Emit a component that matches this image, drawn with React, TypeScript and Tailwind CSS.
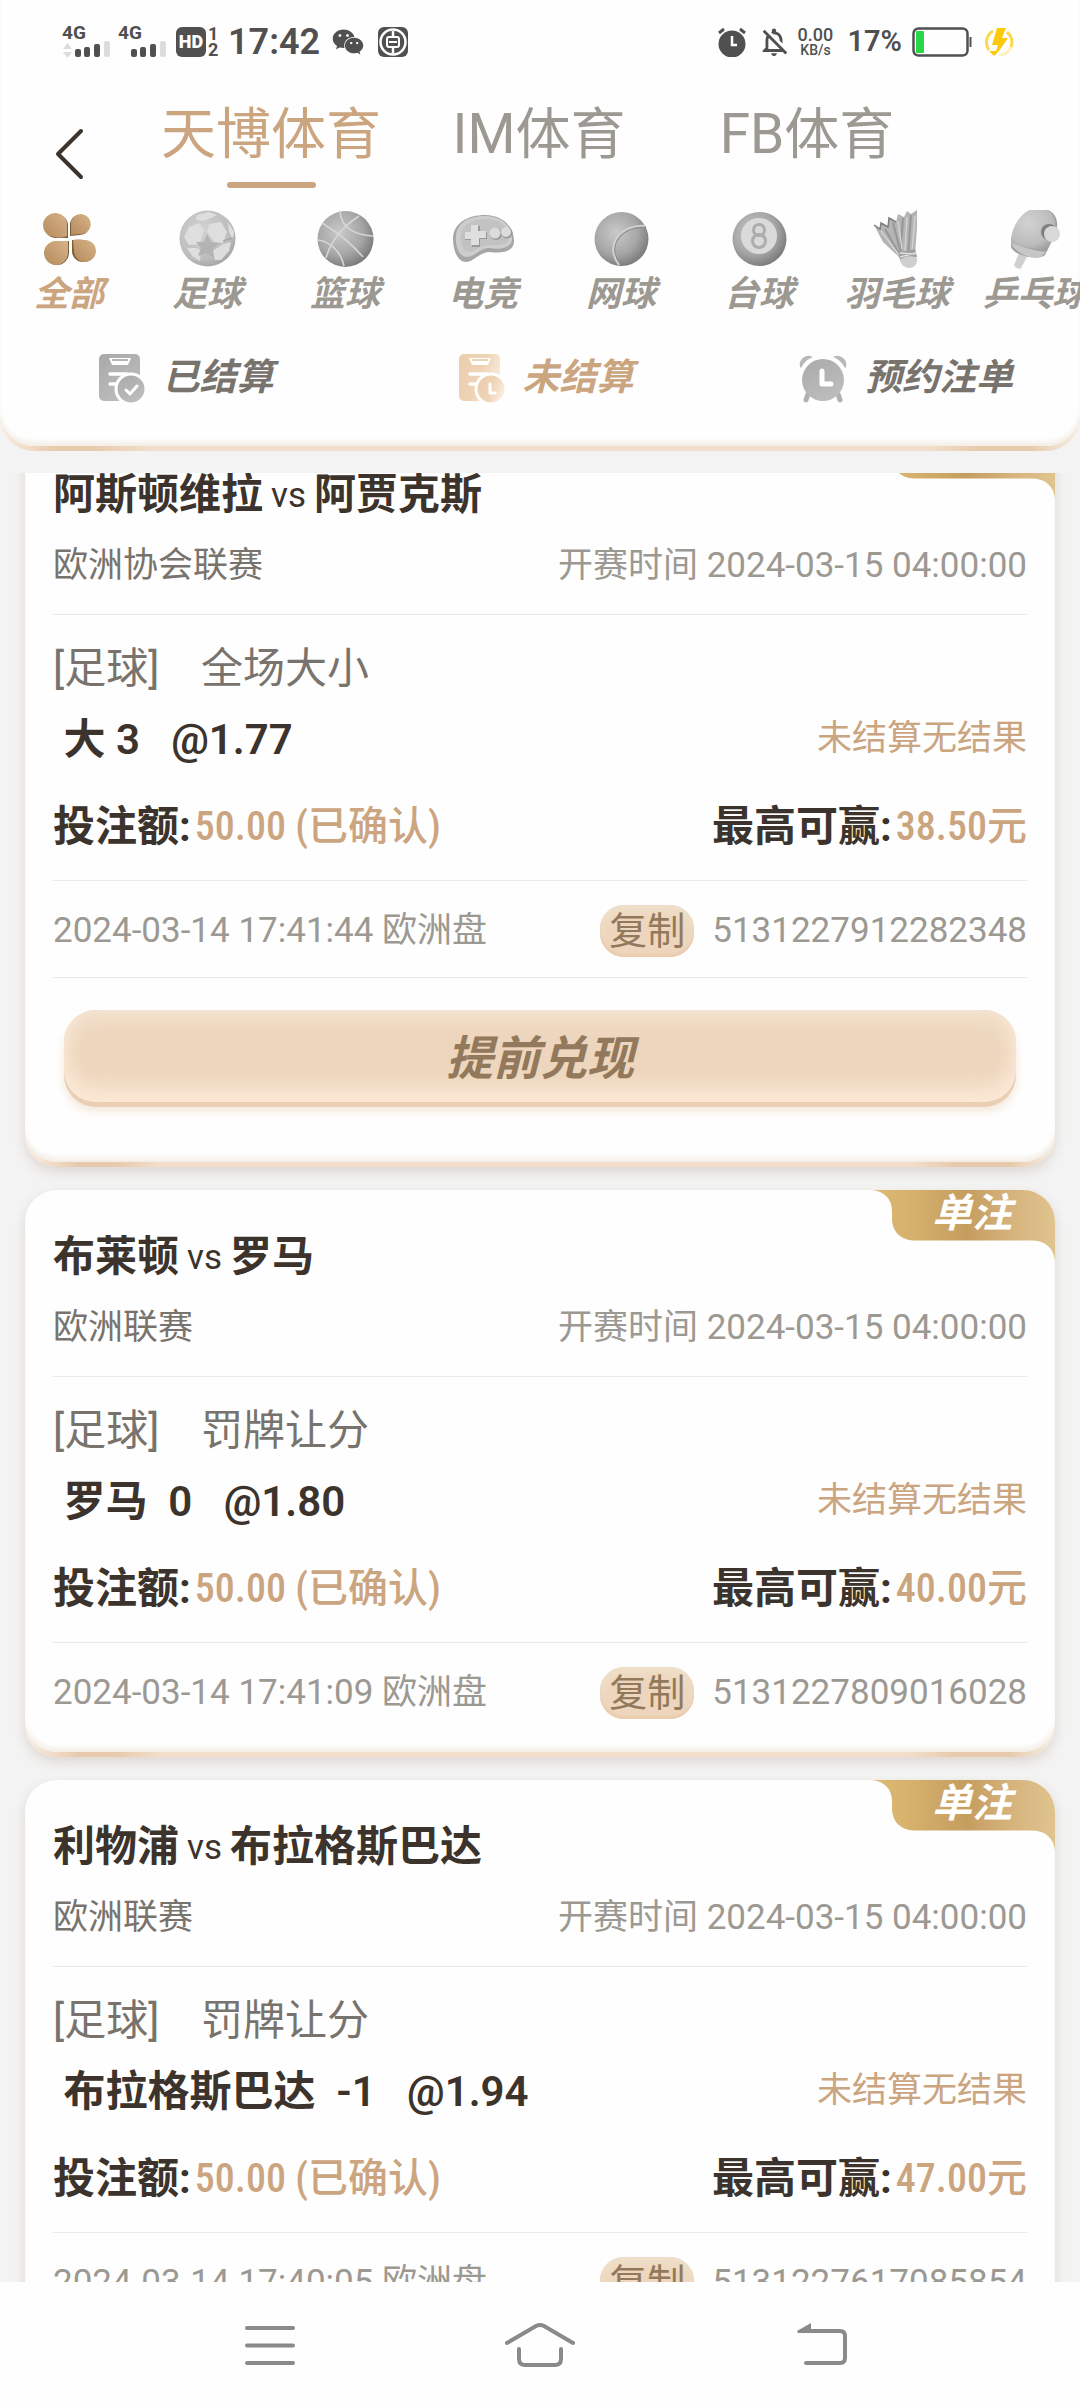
import type { ReactNode } from 'react';
import { FaWeixin } from 'react-icons/fa';
import { MdOutlineNotificationsOff } from 'react-icons/md';

interface Bet {
  id: string;
  home: string;
  away: string;
  league: string;
  startTime: string;
  market: string;
  pick: string;
  stake: string;
  maxWin: string;
  placedAt: string;
  cashOut?: boolean;
}

const BETS: Bet[] = [
  {
    id: '5131227912282348',
    home: '阿斯顿维拉',
    away: '阿贾克斯',
    league: '欧洲协会联赛',
    startTime: '2024-03-15 04:00:00',
    market: '全场大小',
    pick: ' 大 3   @1.77',
    stake: '50.00',
    maxWin: '38.50',
    placedAt: '2024-03-14 17:41:44',
    cashOut: true,
  },
  {
    id: '5131227809016028',
    home: '布莱顿',
    away: '罗马',
    league: '欧洲联赛',
    startTime: '2024-03-15 04:00:00',
    market: '罚牌让分',
    pick: ' 罗马  0   @1.80',
    stake: '50.00',
    maxWin: '40.00',
    placedAt: '2024-03-14 17:41:09',
  },
  {
    id: '5131227617085854',
    home: '利物浦',
    away: '布拉格斯巴达',
    league: '欧洲联赛',
    startTime: '2024-03-15 04:00:00',
    market: '罚牌让分',
    pick: ' 布拉格斯巴达  -1   @1.94',
    stake: '50.00',
    maxWin: '47.00',
    placedAt: '2024-03-14 17:40:05',
  },
];

/* Shared gradients, referenced by id from the icons below */
function GradientDefs() {
  return (
    <svg width="0" height="0" className="absolute" aria-hidden="true">
      <defs>
        <radialGradient id="ball" cx="0.4" cy="0.38" r="0.68">
          <stop offset="0" stopColor="#c9c9c9" />
          <stop offset="0.6" stopColor="#a6a6a6" />
          <stop offset="1" stopColor="#757575" />
        </radialGradient>
        <radialGradient id="ballLight" cx="0.4" cy="0.35" r="0.75">
          <stop offset="0" stopColor="#d2d2d2" />
          <stop offset="0.7" stopColor="#bcbcbc" />
          <stop offset="1" stopColor="#9a9a9a" />
        </radialGradient>
        <linearGradient id="leaf" x1="1" y1="0" x2="0" y2="1">
          <stop offset="0" stopColor="#d8b48a" />
          <stop offset="1" stopColor="#b48a5b" />
        </linearGradient>
        <linearGradient id="grayFill" x1="0" y1="0" x2="0.6" y2="1">
          <stop offset="0" stopColor="#a9a9a9" />
          <stop offset="1" stopColor="#bdbdbd" />
        </linearGradient>
        <linearGradient id="goldFill" x1="0" y1="0" x2="1" y2="0.4">
          <stop offset="0" stopColor="#ecceae" />
          <stop offset="0.6" stopColor="#efd3b5" />
          <stop offset="1" stopColor="#f9eadb" />
        </linearGradient>
        <linearGradient id="ribbon" x1="0" y1="0" x2="1" y2="0">
          <stop offset="0" stopColor="#ddba70" />
          <stop offset="0.2" stopColor="#d6b26d" />
          <stop offset="0.52" stopColor="#c59d5f" />
          <stop offset="0.76" stopColor="#d6b37d" />
          <stop offset="1" stopColor="#e0c48e" />
        </linearGradient>
      </defs>
    </svg>
  );
}

function AllIcon() {
  return (
    <svg width="57" height="57" viewBox="0 0 57 57">
      <g fill="#7d5c3a">
        <path d="M27 28H14A12 12 0 1 1 27 15Z" />
        <path d="M29 26V13A10 10 0 1 1 39 25Z" />
        <path d="M28 31V43A12 12 0 1 1 16 31Z" />
        <path d="M31 30H42A11 11 0 1 1 31 41Z" />
      </g>
      <g fill="url(#leaf)">
        <path d="M26 26C22 28 18 28 13 27A12 12 0 1 1 26 16Z" />
        <path d="M30 25V12A10 10 0 1 1 39 24Z" />
        <path d="M27 31V43A12 12 0 1 1 16 31Z" />
        <path d="M32 30C36 29 40 29 43 30A11 11 0 1 1 33 42Z" />
      </g>
    </svg>
  );
}

function FootballIcon() {
  return (
    <svg width="57" height="57" viewBox="0 0 57 57">
      <circle cx="28.500" cy="28.500" r="28" fill="url(#ballLight)" />
      <g fill="#dedede">
        <path d="M10 17L20 13L25 20L21 34L10 35L5 27Z" />
        <path d="M30 14L42 12L48 22L44 33L35 32L28 22Z" />
        <path d="M17 38L22 40L21 51L14 47L8 38Z" />
        <path d="M34 41L44 34L52 32L50 41L42 50L36 50Z" />
        <path d="M18 5L30 2L38 5L32 8L24 11L17 10Z" />
        <path d="M49 12L55 22L54 30L50 22Z" />
      </g>
      <path d="M28 24L32 32L40 33L34 39L35 48L27 43L19 46L22 38L17 32L25 32Z" fill="#b3b3b3" />
      <path d="M44 31L54 28" stroke="#a0a0a0" fill="none" />
    </svg>
  );
}

function BasketballIcon() {
  return (
    <svg width="57" height="57" viewBox="0 0 57 57">
      <circle cx="28.500" cy="29" r="28" fill="url(#ball)" />
      <g fill="none" stroke="#d6d6d6" strokeWidth="1.600">
        <path d="M9 48C14 30 27 16 42 6" />
        <path d="M5 13C20 22 34 33 46 47" />
        <path d="M23 1C24 18 38 25 56 26" />
        <path d="M1 30C14 32 24 42 27 56" />
      </g>
    </svg>
  );
}

function GamepadIcon() {
  return (
    <svg width="62" height="57" viewBox="0 0 62 57">
      <path d="M1 29C1 13 16 5 33 5C51 5 62 17 62 31C62 41 51 44 38 42C27 42 22 52 14 52C6 52 1 41 1 29Z" fill="#a6a6a6" />
      <path d="M4 26C5 12 18 6 33 6C50 6 61 17 60 30C59 38 49 40 38 38C28 37 23 47 15 47C8 47 3 38 4 26Z" fill="#cdcdcd" />
      <path d="M9 25C11 13 22 9 34 9C48 9 57 18 57 27C57 35 47 36 38 35C28 35 23 42 17 42C11 42 8 34 9 25Z" fill="#c2c2c2" />
      <path d="M20 16H28V22H35V29H28V37H20V30H13V23H20Z" fill="#999" />
      <path d="M19 15H26V21H34V28H27V35H19V29H13V22H19Z" fill="#dfdfdf" />
      <circle cx="44" cy="24" r="6" fill="#999" />
      <circle cx="43" cy="23" r="5.500" fill="#dcdcdc" />
      <circle cx="55" cy="23" r="5.500" fill="#999" />
      <circle cx="54" cy="22" r="5" fill="#dcdcdc" />
    </svg>
  );
}

function TennisIcon() {
  return (
    <svg width="57" height="57" viewBox="0 0 57 57">
      <circle cx="28.500" cy="29" r="27" fill="url(#ball)" />
      <path d="M53 17C31 15 11 34 27 55" fill="none" stroke="#8a8a8a" strokeWidth="2" />
      <path d="M52 16C30 14 10 34 26 55" fill="none" stroke="#d2d2d2" strokeWidth="2" />
    </svg>
  );
}

function BilliardsIcon() {
  return (
    <svg width="57" height="57" viewBox="0 0 57 57">
      <circle cx="28.500" cy="29" r="27" fill="url(#ball)" />
      <circle cx="28" cy="26" r="18" fill="#dadada" />
      <circle cx="28" cy="20" r="5.500" fill="none" stroke="#acacac" strokeWidth="3" />
      <circle cx="28" cy="31" r="6.500" fill="none" stroke="#acacac" strokeWidth="3" />
    </svg>
  );
}

function ShuttlecockIcon() {
  return (
    <svg width="57" height="60" viewBox="0 0 57 60">
      <path d="M5 16L11 20L12 14L19 18L20 9L27 13L29 5L35 8L38 2L42 5L48 1V18L46 46L31 49L14 33Z" fill="#b4b4b4" />
      <path d="M34 9L31 49M42 6L39 46M24 14L33 48M16 20L32 48" stroke="#979797" strokeWidth="2" fill="none" />
      <path d="M29 12L33 40M38 8L36 42M46 7L43 44M12 22L30 46" stroke="#d2d2d2" strokeWidth="1.500" fill="none" />
      <path d="M5 16L11 20L12 14L19 18L20 9L27 13" stroke="#7c7c7c" strokeWidth="1.500" fill="none" />
      <path d="M30 43L46 40L48 48L31 51Z" fill="#a0a0a0" />
      <path d="M31 44L46 45M31 48L47 44" stroke="#dedede" strokeWidth="1.500" />
      <path d="M31 51C35 47 43 46 48 49C49 55 45 59 40 59C36 59 32 56 31 51Z" fill="#cfcfcf" />
    </svg>
  );
}

function PingPongIcon() {
  return (
    <svg width="57" height="63" viewBox="0 0 57 63">
      <path d="M12 46L20 50L14 61C13 63 8 61 7 58Z" fill="#d0d0d0" />
      <path d="M4 34C5 18 18 1 33 1C47 2 53 12 49 26L38 48C32 54 7 49 4 40Z" fill="#a2a2a2" />
      <path d="M4 33C5 17 17 1 31 1C46 2 51 12 47 26L40 43C28 43 14 40 4 36Z" fill="url(#ballLight)" />
      <path d="M4 36C14 39 26 44 39 45L34 50C24 53 8 46 4 36Z" fill="#c6c6c6" />
      <circle cx="42" cy="25" r="8" fill="#7f7f7f" />
      <circle cx="45" cy="27" r="8" fill="#d8d8d8" />
    </svg>
  );
}

function SheetIcon({ fill, mark }: { fill: string; mark: string }) {
  return (
    <svg width="46" height="49" viewBox="0 0 46 49" className="shrink-0">
      <rect width="41" height="47" rx="5" fill={fill} />
      <path d="M10 4H32L29 11H13Z" fill="#fff" />
      <path d="M13 6H29" stroke={fill === 'url(#grayFill)' ? '#b5b5b5' : '#eed3b5'} strokeWidth="2" />
      <path d="M11 20H28M11 30H18" stroke="#fff" strokeWidth="3.500" strokeLinecap="round" />
      <circle cx="32" cy="35" r="16.500" fill="#fff" />
      <circle cx="32" cy="35" r="13.500" fill={fill} />
      <path d={mark} fill="none" stroke="#fff" strokeWidth="3" strokeLinecap="round" strokeLinejoin="round" />
    </svg>
  );
}

function AlarmIcon() {
  return (
    <svg width="48" height="49" viewBox="0 0 48 49" className="shrink-0">
      <path d="M9 40L7 46M39 40L41 46" stroke="#b0b0b0" strokeWidth="5" strokeLinecap="round" />
      <path d="M1 13A9 9 0 0 1 14 3C9 5 5 8 2 14ZM47 13A9 9 0 0 0 34 3C39 5 43 8 46 14Z" fill="#b8b8b8" />
      <circle cx="24" cy="26" r="21" fill="url(#grayFill)" />
      <path d="M23 17V30H32" fill="none" stroke="#fff" strokeWidth="5" strokeLinecap="round" strokeLinejoin="round" />
    </svg>
  );
}

const SPORTS: { name: string; icon: ReactNode }[] = [
  { name: '全部', icon: <AllIcon /> },
  { name: '足球', icon: <FootballIcon /> },
  { name: '篮球', icon: <BasketballIcon /> },
  { name: '电竞', icon: <GamepadIcon /> },
  { name: '网球', icon: <TennisIcon /> },
  { name: '台球', icon: <BilliardsIcon /> },
  { name: '羽毛球', icon: <ShuttlecockIcon /> },
  { name: '乒乓球', icon: <PingPongIcon /> },
];

function Signal({ data = false }: { data?: boolean }) {
  return (
    <div className="flex w-12 flex-col">
      <span className="text-[19px] font-bold leading-4">4G</span>
      <svg width="48" height="18" viewBox="0 0 48 18">
        {data && <path d="M1 8L5.500 2L10 8ZM1 11L5.500 17L10 11Z" fill="#dcdcdc" />}
        <rect x="13" y="8" width="6" height="8" rx="2" fill="#505050" />
        <rect x="22" y="6" width="6" height="10" rx="2" fill="#505050" />
        <rect x="32" y="3" width="6" height="13" rx="2" fill="#505050" />
        <rect x="42" y="0" width="6" height="16" rx="2" fill="#dcdcdc" />
      </svg>
    </div>
  );
}

function StatusBar() {
  return (
    <div className="flex h-[84px] items-center justify-between pl-[62px] pr-[66px] text-[#505050]">
      <div className="flex items-center">
        <Signal data />
        <div className="ml-2">
          <Signal />
        </div>
        <span className="ml-2.5 flex h-[30px] w-[30px] items-center justify-center rounded-md bg-[#505050] text-lg font-black text-white">
          HD
        </span>
        <span className="ml-0.5 flex w-2.5 flex-col text-center text-lg font-bold leading-4">
          <span>1</span>
          <span>2</span>
        </span>
        <span className="ml-2.5 text-4xl font-semibold">17:42</span>
        <FaWeixin className="ml-3 h-8 w-8" />
        <svg width="30" height="30" viewBox="0 0 30 30" className="ml-3.5">
          <rect width="30" height="30" rx="6" fill="#505050" />
          <circle cx="15" cy="15" r="12.500" fill="none" stroke="#fff" strokeWidth="2.500" />
          <path d="M15 4V9M15 21V26" stroke="#fff" strokeWidth="2.500" />
          <rect x="9" y="10" width="12" height="10" rx="2" fill="none" stroke="#fff" strokeWidth="2" />
          <path d="M11 15H19" stroke="#fff" strokeWidth="2" />
        </svg>
      </div>
      <div className="flex items-center">
        <svg width="30" height="30" viewBox="0 0 30 30">
          <circle cx="15" cy="17" r="13.500" fill="#505050" />
          <path d="M2 6L7 2M28 6L23 2" stroke="#505050" strokeWidth="3" />
          <path d="M15 9V18H20" fill="none" stroke="#fff" strokeWidth="2.500" />
        </svg>
        <MdOutlineNotificationsOff className="ml-2.5 h-[34px] w-[34px]" />
        <span className="ml-1 flex w-10 flex-col items-center font-medium">
          <span className="text-lg leading-[17px]">0.00</span>
          <span className="text-sm leading-[15px]">KB/s</span>
        </span>
        <span className="ml-3 text-[29px] font-semibold">17%</span>
        <svg width="60" height="30" viewBox="0 0 60 30" className="ml-2.5">
          <rect x="1.500" y="1.500" width="54" height="27" rx="5" fill="none" stroke="#505050" strokeWidth="2.500" />
          <rect x="4" y="4" width="8" height="22" rx="1" fill="#28d745" />
          <path d="M58.500 10V20" stroke="#505050" strokeWidth="2" />
        </svg>
        <svg width="30" height="30" viewBox="0 0 30 30" className="ml-3">
          <path d="M9 4A13 13 0 0 0 5 23M23 5A13 13 0 0 1 27 20" fill="none" stroke="#fbd84e" strokeWidth="3" />
          <path d="M15 28A13 13 0 0 0 27 20" fill="none" stroke="#fdf0bd" strokeWidth="3" />
          <path d="M13 1H22L18 11H24L15 24L10 29L5 24H12L14 18H8Z" fill="#fdc90b" />
        </svg>
      </div>
    </div>
  );
}

function Tab({ label, active = false }: { label: string; active?: boolean }) {
  return (
    <button type="button" className="flex flex-col items-center gap-2">
      <span className={`text-[55px] leading-[80px] ${active ? 'text-[#cba57f]' : 'text-[#9c9892]'}`}>{label}</span>
      {active && <span className="h-1.5 w-[89px] rounded-full bg-[#cba57f]" />}
    </button>
  );
}

function Filter({ label, icon, active = false }: { label: string; icon: ReactNode; active?: boolean }) {
  return (
    <button
      type="button"
      className={`flex h-[58px] flex-1 items-center justify-center gap-[18px] pl-3 text-[37px] font-bold italic ${
        active ? 'text-[#cba57f]' : 'text-[#78736d]'
      }`}
    >
      {icon}
      {label}
    </button>
  );
}

function Header() {
  return (
    <header className="rounded-b-[34px] bg-[linear-gradient(90deg,#f8efe6_0,#f2decb_24px,#e7caac_56px,#e7caac_90px,#f2decb_150px,#f2decb_calc(100%-150px),#e7caac_calc(100%-100px),#e7caac_calc(100%-50px),#f8efe6_100%)] pb-[5px]">
      <div className="rounded-b-[34px] bg-[#fefefe] pb-[39px] shadow-[inset_0_-6px_5px_-2px_#f3ede6]">
        <StatusBar />
        <div className="flex h-[104px] pr-[139px]">
          <button type="button" aria-label="返回" className="flex w-[137px] items-center pl-[55px] pt-9">
            <svg width="29" height="52" viewBox="0 0 29 52">
              <path d="M26 3L3 26L26 49" fill="none" stroke="#3c342c" strokeWidth="4" strokeLinecap="round" strokeLinejoin="round" />
            </svg>
          </button>
          <nav className="grid flex-1 grid-cols-3 items-start pt-2.5">
            <Tab label="天博体育" active />
            <Tab label="IM体育" />
            <Tab label="FB体育" />
          </nav>
        </div>
        <nav className="mt-[22px] flex overflow-hidden">
          {SPORTS.map((sport, i) => (
            <button key={sport.name} type="button" className="flex w-[138px] shrink-0 flex-col items-center gap-2">
              <span className="flex h-[57px] items-center">{sport.icon}</span>
              <span
                className={`text-[35px] font-bold italic leading-10 ${i === 0 ? 'text-[#cba57f]' : 'text-[#9c9892]'}`}
              >
                {sport.name}
              </span>
            </button>
          ))}
        </nav>
        <div className="mt-[34px] flex">
          <Filter label="已结算" icon={<SheetIcon fill="url(#grayFill)" mark="M27 36L31 40L38 32" />} />
          <Filter label="未结算" active icon={<SheetIcon fill="url(#goldFill)" mark="M31 30V39H36" />} />
          <Filter label="预约注单" icon={<AlarmIcon />} />
        </div>
      </div>
    </header>
  );
}

function Ribbon() {
  return (
    <div className="absolute right-0 top-0 h-[71px] w-[183px]">
      <svg width="183" height="71" viewBox="0 0 183 71" className="absolute inset-0">
        <path
          d="M0 0H151A32 32 0 0 1 183 32V71C182 59 174 51 161 50.500H42C28 50 20 41 20 28V21C20 9 12 1 0 0Z"
          fill="url(#ribbon)"
        />
      </svg>
      <span className="relative block pl-[60px] text-[40px] font-bold italic leading-[48px] text-white">单注</span>
    </div>
  );
}

const AMOUNT =
  "text-[40px] font-['Liberation_Sans_Narrow','Roboto_Condensed','Noto_Sans_CJK_SC',sans-serif] font-medium text-[#cba57f]";

function BetCard({ bet }: { bet: Bet }) {
  return (
    <article className="relative rounded-[32px] bg-[linear-gradient(90deg,#f8efe6_0,#f2decb_24px,#e7caac_54px,#e7caac_90px,#f2decb_135px,#f2decb_calc(100%-145px),#e7caac_calc(100%-100px),#e7caac_calc(100%-45px),#f8efe6_100%)] pb-[5px] shadow-[0_5px_12px_#ddd6d0]">
      <div className="rounded-[32px] bg-[#fefefe] px-7 pb-[13px] pt-[31px] shadow-[inset_0_-6px_5px_-2px_#f3ede6]">
        <h2 className="flex h-[71px] items-center gap-2 whitespace-nowrap text-[42px] font-bold text-[#3c342c]">
          {bet.home}
          <span className="pt-1 text-[35px] font-normal">vs</span>
          {bet.away}
        </h2>
        <div className="flex h-[85px] items-start justify-between border-b border-[#e9e9e8] text-[35px] leading-[71px]">
          <span className="text-[#78736d]">{bet.league}</span>
          <span className="text-[#9c9892]">开赛时间 {bet.startTime}</span>
        </div>

        <p className="mt-[18px] whitespace-pre text-[42px] leading-[71px] text-[#78736d]">[足球]    {bet.market}</p>
        <div className="flex h-[71px] items-center justify-between">
          <strong className="whitespace-pre text-[42px] font-semibold text-[#3c342c]">{bet.pick}</strong>
          <span className="text-[35px] text-[#cba57f]">未结算无结果</span>
        </div>
        <div className="mt-4 flex h-[90px] items-start justify-between border-b border-[#e9e9e8] text-[42px] font-bold leading-[71px] text-[#3c342c]">
          <span className="flex gap-1">
            投注额:
            <span className={AMOUNT}>{bet.stake} (已确认)</span>
          </span>
          <span className="flex gap-1">
            最高可赢:
            <span className={AMOUNT}>{bet.maxWin}元</span>
          </span>
        </div>

        <div className="flex h-[96px] items-center justify-between pt-1 text-[35px] text-[#9c9892]">
          <span>{bet.placedAt} 欧洲盘</span>
          <span className="flex items-center gap-[18px]">
            <button
              type="button"
              className="h-[52px] rounded-[24px] bg-[#edd6bd] px-[9px] text-[38px] leading-[52px] text-[#93795b] shadow-[inset_0_-3px_3px_#ebcbae,inset_0_8px_8px_#efdfc9]"
            >
              复制
            </button>
            {bet.id}
          </span>
        </div>

        {bet.cashOut && (
          <div className="border-t border-[#e9e9e8] px-[11px] pb-[42px] pt-8">
            <button
              type="button"
              className="mb-[5px] h-[92px] w-full rounded-[32px] bg-[#edd6bd] pt-1.5 text-[47px] font-bold italic text-[#93795b] shadow-[0_5px_0_#ebcfb5,0_9px_10px_#f3e6d8,inset_0_-14px_20px_#fce9d6,inset_0_8px_20px_#f5e5d3]"
            >
              提前兑现
            </button>
          </div>
        )}
      </div>
      <Ribbon />
    </article>
  );
}

function SystemNav() {
  return (
    <footer className="grid h-[126px] shrink-0 grid-cols-3 place-items-center bg-[#fefefe] px-[135px]">
      <button type="button" aria-label="最近任务">
        <svg width="50" height="44" viewBox="0 0 50 44">
          <path d="M2 5H48M2 22.500H48M2 40H48" stroke="#8a8a8a" strokeWidth="4" strokeLinecap="round" />
        </svg>
      </button>
      <button type="button" aria-label="主屏幕">
        <svg width="70" height="46" viewBox="0 0 70 46" fill="none" stroke="#8a8a8a" strokeWidth="4" strokeLinecap="round">
          <path d="M2 21L31 4Q35 2 39 4L68 21" />
          <path d="M14 27V37Q14 43 20 43H50Q56 43 56 37V27" />
        </svg>
      </button>
      <button type="button" aria-label="返回上一页" className="pl-6">
        <svg width="52" height="44" viewBox="0 0 52 44">
          <path d="M10 8H44Q49 8 49 13V35Q49 40 44 40H10" fill="none" stroke="#8a8a8a" strokeWidth="4" strokeLinecap="round" />
          <path d="M1 8L15 0V10H2Z" fill="#8a8a8a" />
        </svg>
      </button>
    </footer>
  );
}

export default function App() {
  return (
    <div className="flex h-screen flex-col bg-[#f3f3f3] font-['Roboto','Noto_Sans_CJK_SC',sans-serif]">
      <GradientDefs />
      <Header />
      {/* The list sits slightly scrolled, so the first card is cut by the header */}
      <main className="mt-[22px] min-h-0 flex-1 overflow-hidden px-[25px]">
        <div className="-mt-[45px] flex flex-col gap-[23px]">
          {BETS.map((bet) => (
            <BetCard key={bet.id} bet={bet} />
          ))}
        </div>
      </main>
      <SystemNav />
    </div>
  );
}
